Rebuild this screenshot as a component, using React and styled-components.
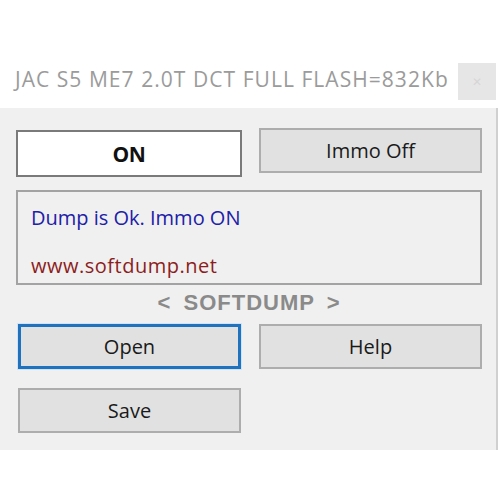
import styled, { createGlobalStyle } from 'styled-components'

const GlobalStyle = createGlobalStyle`
    html, body {
        margin: 0;
        padding: 0;
        background: #ffffff;
    }
    body {
        font-family: "Open Sans", "Noto Sans", sans-serif;
    }
`

const Page = styled.div`
    width: 500px;
    height: 500px;
    padding-top: 58px;
    box-sizing: border-box;
    background: #ffffff;
`

const Window = styled.div`
    width: 498px;
    display: flex;
    flex-direction: column;
`

const TitleBar = styled.div`
    height: 50px;
    display: flex;
    align-items: center;
    justify-content: space-between;
    padding: 0 2px 0 15px;
    background: #ffffff;
`

const Title = styled.span`
    font-size: 21px;
    line-height: 28px;
    margin-bottom: 8px;
    color: #9b9b9b;
    letter-spacing: 1.05px;
    white-space: nowrap;
`

const CloseButton = styled.div`
    width: 38px;
    height: 37px;
    margin-bottom: 3px;
    background: #e6e6e6;
    color: #d6d6d6;
    font-size: 12px;
    display: flex;
    align-items: center;
    justify-content: center;
`

const Client = styled.div`
    height: 342px;
    background: #f0f0f0;
    border-right: 2px solid #d0d0d0;
    padding: 20px 14px 0 16px;
    box-sizing: border-box;
    display: flex;
    flex-direction: column;
`

const Row = styled.div`
    display: grid;
    grid-template-columns: 226px 223px;
    column-gap: 17px;
    align-items: start;
    margin-top: ${(p) => p.$top || 0}px;
`

const StatusBox = styled.div`
    height: 47px;
    margin-top: 2px;
    box-sizing: border-box;
    background: #ffffff;
    border: 2px solid #7a7a7a;
    display: flex;
    align-items: center;
    justify-content: center;
    font-weight: 700;
    font-size: 21px;
    color: #111111;
    letter-spacing: -0.3px;
`

const WinButton = styled.div`
    height: 45px;
    box-sizing: border-box;
    margin-left: ${(p) => p.$inset || 0}px;
    width: ${(p) => (p.$inset ? `calc(100% - ${p.$inset + 1}px)` : '100%')};
    background: #e1e1e1;
    border: ${(p) => (p.$focused ? '3px solid #1f72bd' : '2px solid #adadad')};
    box-shadow: ${(p) => (p.$focused ? '0 0 0 1px #cfe4f6' : 'none')};
    display: flex;
    align-items: center;
    justify-content: center;
    font-size: 20px;
    color: #1a1a1a;
    letter-spacing: 0;
`

const InfoPanel = styled.div`
    margin-top: 13px;
    width: 466px;
    height: 95px;
    box-sizing: border-box;
    border: 2px solid #a3a3a3;
    padding: 13px 0 0 13px;
    display: flex;
    flex-direction: column;
    gap: 22px;
`

const InfoLine = styled.div`
    font-size: 20px;
    line-height: 26px;
    color: ${(p) => p.$color};
    letter-spacing: ${(p) => p.$spacing || 0}px;
`

const Brand = styled.div`
    width: 466px;
    height: 39px;
    padding-bottom: 4px;
    box-sizing: border-box;
    display: flex;
    align-items: center;
    justify-content: center;
    font-family: "Liberation Sans", Arial, sans-serif;
    font-size: 22px;
    font-weight: 700;
    color: #8a8a8a;
    letter-spacing: 1px;
    word-spacing: 5px;
`

export default function App() {
    return (
        <Page>
            <GlobalStyle />
            <Window>
                <TitleBar>
                    <Title>JAC S5 ME7 2.0T DCT FULL FLASH=832Kb</Title>
                    <CloseButton>✕</CloseButton>
                </TitleBar>
                <Client>
                    <Row>
                        <StatusBox>ON</StatusBox>
                        <WinButton>Immo Off</WinButton>
                    </Row>
                    <InfoPanel>
                        <InfoLine $color='#2020a8'>Dump is Ok. Immo ON</InfoLine>
                        <InfoLine $color='#8c1d1d' $spacing={0.5}>www.softdump.net</InfoLine>
                    </InfoPanel>
                    <Brand>&lt; SOFTDUMP &gt;</Brand>
                    <Row>
                        <WinButton $focused $inset={2}>Open</WinButton>
                        <WinButton>Help</WinButton>
                    </Row>
                    <Row $top={19}>
                        <WinButton $inset={2}>Save</WinButton>
                    </Row>
                </Client>
            </Window>
        </Page>
    )
}
